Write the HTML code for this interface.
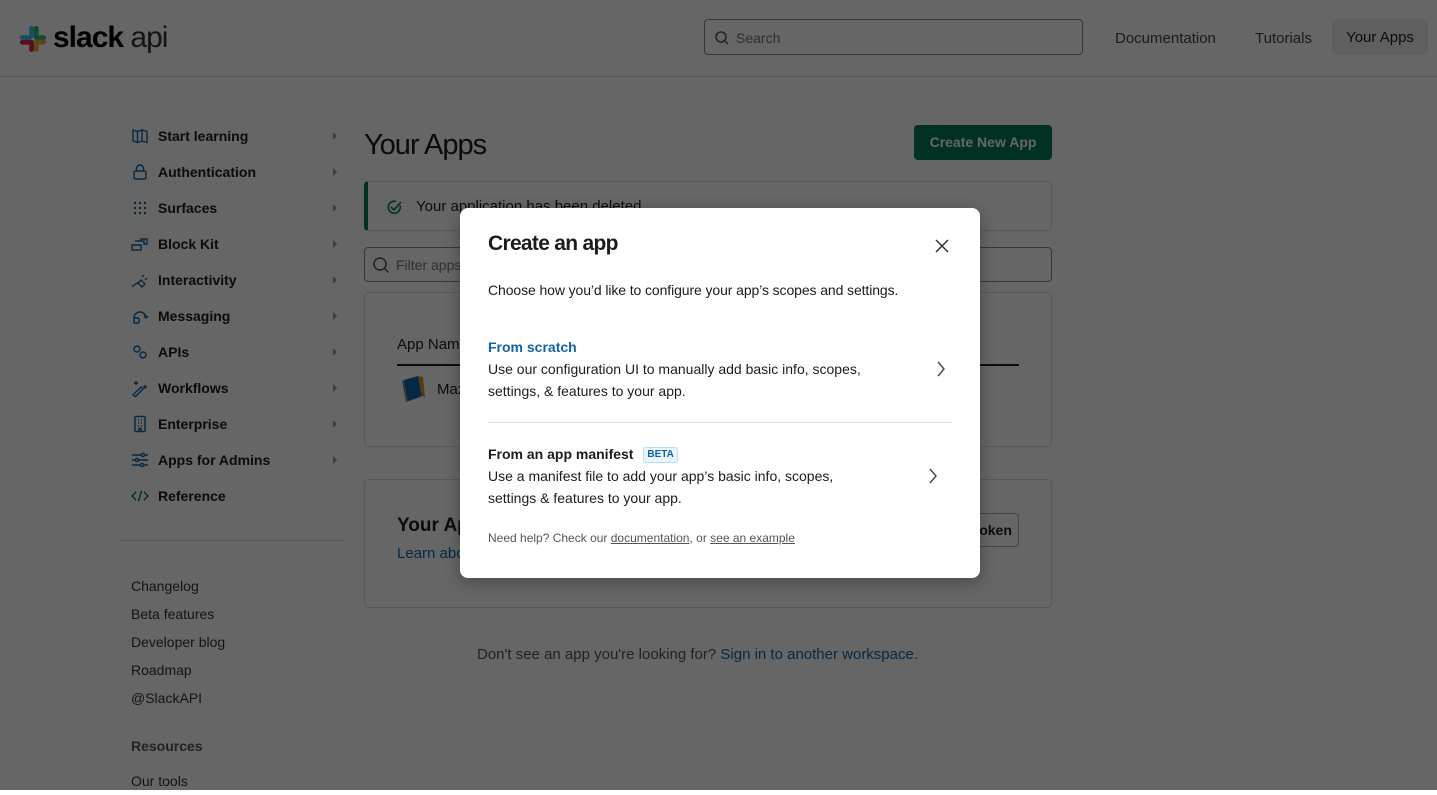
<!DOCTYPE html>
<html><head><meta charset="utf-8"><style>
*{box-sizing:border-box;margin:0;padding:0}
body{width:1437px;height:790px;overflow:hidden;background:#fff;font-family:"Liberation Sans",sans-serif;color:#1d1c1d;position:relative}
.hdr{position:absolute;left:0;top:0;width:1437px;height:77px;border-bottom:1px solid #ddd;background:#fff}
.abs{position:absolute}
.search{left:704px;top:19px;width:379px;height:36px;border:1px solid #888;border-radius:4px;font-size:14px;color:#777;padding:10px 0 0 31px}
.nav{font-size:15px;color:#444;top:30px}
.ya{left:1332px;top:19px;width:96px;height:36px;background:#eee;border-radius:4px;font-size:15px;color:#1d1c1d;text-align:center;line-height:38px}
.side{left:131px;top:118px}
.si{height:36px;display:flex;align-items:center;font-size:14px;font-weight:bold;position:relative;width:210px}
.si svg{width:18px;height:18px;margin-right:9px;flex:none}
.si .ar{position:absolute;left:202px;top:14px;width:0;height:0;border-left:4px solid #999;border-top:4px solid transparent;border-bottom:4px solid transparent}
.lk{font-size:14px;color:#333;height:28px;line-height:28px}
.card{border:1px solid #ddd;border-radius:4px;background:#fff}
.ov{position:absolute;left:0;top:0;width:1437px;height:790px;background:rgba(0,0,0,.6)}
.modal{position:absolute;left:460px;top:208px;width:520px;height:370px;background:#fff;border-radius:8px;box-shadow:0 4px 16px rgba(0,0,0,.3)}
.m{position:absolute;left:28px}
.p{font-size:14px;line-height:22px;color:#1d1c1d}
</style></head><body>
<div class="hdr">
 <svg class="abs" style="left:19px;top:25px" width="28" height="28" viewBox="0 0 30 30">
  <rect x="11" y="1" width="5" height="13" rx="2.5" fill="#36c5f0"/><rect x="1" y="11" width="13" height="5" rx="2.5" fill="#36c5f0"/>
  <rect x="16" y="1" width="5" height="13" rx="2.5" fill="#2eb67d"/><rect x="16" y="11" width="13" height="5" rx="2.5" fill="#2eb67d"/>
  <rect x="11" y="16" width="5" height="13" rx="2.5" fill="#e01e5a"/><rect x="1" y="16" width="13" height="5" rx="2.5" fill="#e01e5a"/>
  <rect x="16" y="16" width="5" height="13" rx="2.5" fill="#ecb22e"/><rect x="16" y="16" width="13" height="5" rx="2.5" fill="#ecb22e"/>
 </svg>
 <div class="abs" style="left:53px;top:21px;font-size:30px;font-weight:bold;letter-spacing:-1px;color:#000">slack <span style="font-weight:normal;color:#333">api</span></div>
 <div class="abs search">Search</div>
 <svg class="abs" style="left:714px;top:30px" width="16" height="16" viewBox="0 0 16 16"><circle cx="7" cy="7" r="5" fill="none" stroke="#555" stroke-width="1.5"/><path d="M10.5 10.5 14 14" stroke="#555" stroke-width="1.5"/></svg>
 <div class="abs nav" style="left:1115px">Documentation</div>
 <div class="abs nav" style="left:1255px">Tutorials</div>
 <div class="abs ya">Your Apps</div>
</div>
<div class="abs side">
 <div class="si"><svg viewBox="0 0 18 18" fill="none" stroke="#1264a3" stroke-width="1.4"><path d="M2 3l4.5 1.5L11 3l5 1.5v11L11 14l-4.5 1.5L2 14z M6.5 4.5v11 M11 3v11"/></svg>Start learning<i class="ar"></i></div>
 <div class="si"><svg viewBox="0 0 18 18" fill="none" stroke="#1264a3" stroke-width="1.4"><rect x="3" y="8" width="12" height="8" rx="1.5"/><path d="M5.5 8V5.5a3.5 3.5 0 017 0V8"/></svg>Authentication<i class="ar"></i></div>
 <div class="si"><svg viewBox="0 0 18 18" fill="#1264a3"><circle cx="4" cy="4" r="1.2"/><circle cx="9" cy="4" r="1.2"/><circle cx="14" cy="4" r="1.2"/><circle cx="4" cy="9" r="1.2"/><circle cx="9" cy="9" r="1.2"/><circle cx="14" cy="9" r="1.2"/><circle cx="4" cy="14" r="1.2"/><circle cx="9" cy="14" r="1.2"/><circle cx="14" cy="14" r="1.2"/></svg>Surfaces<i class="ar"></i></div>
 <div class="si"><svg viewBox="0 0 18 18" fill="none" stroke="#1264a3" stroke-width="1.4"><path d="M1 10h9v5H1z M4 6h9v4 M10 6V4h6v5h-3"/></svg>Block Kit<i class="ar"></i></div>
 <div class="si"><svg viewBox="0 0 18 18" fill="none" stroke="#1264a3" stroke-width="1.4"><path d="M1 15c3 0 3-3 6-3 M7 12l3-3 4 4-3 3z M11 6l2-2 M14 9l2-2"/></svg>Interactivity<i class="ar"></i></div>
 <div class="si"><svg viewBox="0 0 18 18" fill="none" stroke="#1264a3" stroke-width="1.4"><path d="M3 16v-5a6 6 0 0112 0 M13 9l2 2 2-2 M3 16h4a3 3 0 000-5H3"/></svg>Messaging<i class="ar"></i></div>
 <div class="si"><svg viewBox="0 0 18 18" fill="none" stroke="#1264a3" stroke-width="1.4"><circle cx="6" cy="6" r="3"/><circle cx="12" cy="12" r="3"/></svg>APIs<i class="ar"></i></div>
 <div class="si"><svg viewBox="0 0 18 18" fill="none" stroke="#1264a3" stroke-width="1.4"><path d="M2 16l8-8 2 2-8 8z M5 2v4 M3 4h4 M14 6v4 M12 8h4"/></svg>Workflows<i class="ar"></i></div>
 <div class="si"><svg viewBox="0 0 18 18" fill="none" stroke="#1264a3" stroke-width="1.4"><rect x="4" y="1.5" width="10" height="15"/><path d="M7 5h1M10 5h1M7 8h1M10 8h1M7 11h1M10 11h1M8 16.5v-3h2v3"/></svg>Enterprise<i class="ar"></i></div>
 <div class="si"><svg viewBox="0 0 18 18" fill="none" stroke="#1264a3" stroke-width="1.4"><path d="M1 4h16M1 9h16M1 14h16"/><circle cx="12" cy="4" r="1.6" fill="#fff"/><circle cx="6" cy="9" r="1.6" fill="#fff"/><circle cx="11" cy="14" r="1.6" fill="#fff"/></svg>Apps for Admins<i class="ar"></i></div>
 <div class="si"><svg viewBox="0 0 18 18" fill="none" stroke="#007a5a" stroke-width="1.4"><path d="M5 5L1 9l4 4M13 5l4 4-4 4M10.5 4l-3 10"/></svg>Reference</div>
</div>
<div class="abs" style="left:120px;top:540px;width:224px;border-top:1px solid #ddd"></div>
<div class="abs" style="left:131px;top:572px">
 <div class="lk">Changelog</div><div class="lk">Beta features</div><div class="lk">Developer blog</div><div class="lk">Roadmap</div><div class="lk">@SlackAPI</div>
 <div class="lk" style="margin-top:20px;font-weight:bold;color:#555">Resources</div>
 <div class="lk" style="margin-top:7px">Our tools</div>
</div>
<div class="abs" style="left:364px;top:129px;font-size:29px;letter-spacing:-1px;color:#1d1c1d">Your Apps</div>
<div class="abs" style="left:914px;top:125px;width:138px;height:35px;background:#007a5a;border-radius:4px;color:#fff;font-size:14px;font-weight:bold;text-align:center;line-height:35px">Create New App</div>
<div class="abs card" style="left:364px;top:181px;width:688px;height:50px;border-left:4px solid #007a5a"></div>
<svg class="abs" style="left:386px;top:199px" width="17" height="17" viewBox="0 0 17 17" fill="none" stroke="#007a5a" stroke-width="1.6"><path d="M14 6.5A6 6 0 1110 2.5 M5 8l3 3 7-8"/></svg>
<div class="abs" style="left:416px;top:198px;font-size:15px">Your application has been deleted.</div>
<div class="abs" style="left:364px;top:247px;width:688px;height:35px;border:1px solid #888;border-radius:4px;font-size:14px;color:#777;padding:9px 0 0 31px">Filter apps by name or workspace</div>
<svg class="abs" style="left:372px;top:256px" width="18" height="18" viewBox="0 0 18 18"><circle cx="8" cy="8" r="6" fill="none" stroke="#555" stroke-width="1.5"/><path d="M12 12l4.5 4.5" stroke="#555" stroke-width="1.5"/></svg>
<div class="abs card" style="left:364px;top:292px;width:688px;height:155px"></div>
<div class="abs" style="left:397px;top:336px;font-size:15px;color:#1d1c1d">App Name</div>
<div class="abs" style="left:397px;top:364px;width:622px;border-top:2px solid #1d1c1d"></div>
<svg class="abs" style="left:398px;top:376px" width="30" height="28" viewBox="0 0 30 28"><path d="M4 5l14-4 4 20-14 5z" fill="#888"/><path d="M6 4l14-4 4 20-14 5z" fill="#1264a3"/><path d="M20 0l5 1 2 20-3-1z" fill="#c89b2e"/></svg>
<div class="abs" style="left:437px;top:381px;font-size:15px">Max Notebook</div>
<div class="abs card" style="left:364px;top:479px;width:688px;height:129px"></div>
<div class="abs" style="left:397px;top:515px;font-size:19px;font-weight:bold">Your App Configuration Tokens</div>
<div class="abs" style="left:397px;top:545px;font-size:15px;color:#1264a3">Learn about tokens</div>
<div class="abs" style="left:900px;top:513px;width:119px;height:34px;border:1px solid #aaa;border-radius:4px;font-size:14px;font-weight:bold;text-align:center;line-height:32px">Generate Token</div>
<div class="abs" style="left:477px;top:646px;font-size:15px;color:#555">Don't see an app you're looking for? <span style="color:#1264a3">Sign in to another workspace.</span></div>
<div class="ov"></div>
<div class="modal">
 <div class="m" style="top:24px;font-size:21px;font-weight:bold;letter-spacing:-0.7px">Create an app</div>
 <svg class="abs" style="left:475px;top:31px" width="14" height="14" viewBox="0 0 14 14"><path d="M1 1l12 12M13 1L1 13" stroke="#333" stroke-width="1.5"/></svg>
 <div class="m p" style="top:71px;letter-spacing:-0.1px">Choose how you’d like to configure your app’s scopes and settings.</div>
 <div class="m p" style="top:128px;font-weight:bold;color:#1264a3">From scratch</div>
 <div class="m p" style="top:150px">Use our configuration UI to manually add basic info, scopes,<br>settings, &amp; features to your app.</div>
 <svg class="abs" style="left:476px;top:152px" width="10" height="18" viewBox="0 0 10 18"><path d="M2 2l6 7-6 7" fill="none" stroke="#444" stroke-width="1.4"/></svg>
 <div class="abs" style="left:28px;top:214px;width:464px;border-top:1px solid #ddd"></div>
 <div class="m p" style="top:235px;font-weight:bold">From an app manifest <span style="display:inline-block;margin-left:6px;font-size:10px;line-height:14px;padding:0 3px;color:#1264a3;background:#e8f5fa;border:1px solid #b5dcf0;border-radius:3px;vertical-align:2px">BETA</span></div>
 <div class="m p" style="top:257px">Use a manifest file to add your app’s basic info, scopes,<br>settings &amp; features to your app.</div>
 <svg class="abs" style="left:468px;top:259px" width="10" height="18" viewBox="0 0 10 18"><path d="M2 2l6 7-6 7" fill="none" stroke="#444" stroke-width="1.4"/></svg>
 <div class="m" style="top:323px;font-size:12px;color:#555">Need help? Check our <u>documentation</u>, or <u>see an example</u></div>
</div>
</body></html>
